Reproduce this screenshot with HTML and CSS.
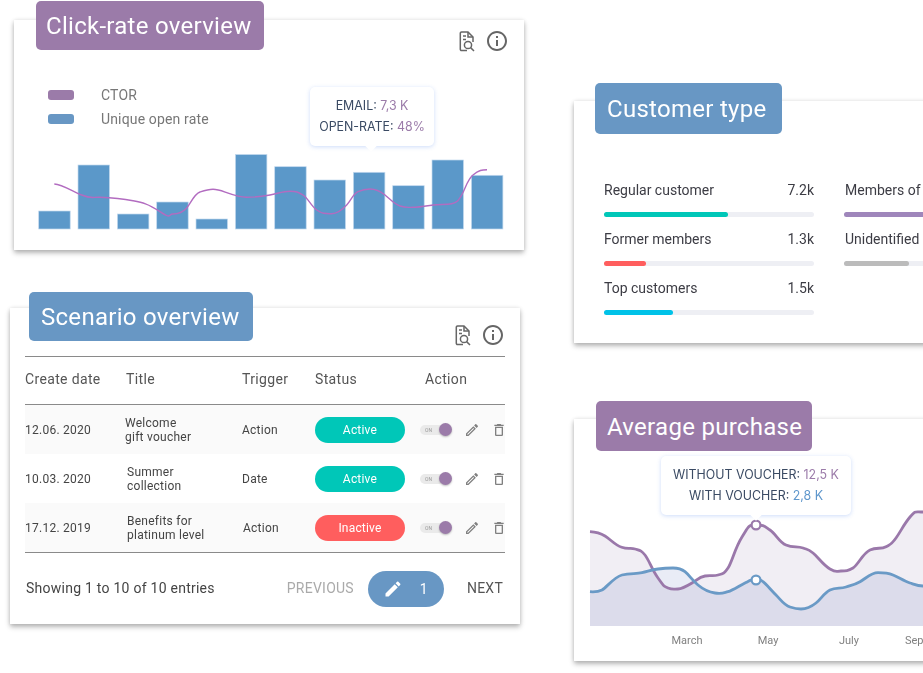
FILE: index.html
```html
<!DOCTYPE html>
<html lang="en">
<head>
  <meta charset="UTF-8">
  <title>Campaign dashboard</title>
  <link rel="stylesheet" href="styles.css">
</head>
<body>
  <div class="board">
    <div class="col-left">

      <section class="card card-clicks">
        <div class="card-title title-purple">Click-rate overview</div>
        <div class="card-tools">
          <svg class="icon-doc" viewBox="0 0 16 21"><path d="M8 19.500H2.500a1.200 1.200 0 0 1-1.200-1.200V2.200A1.200 1.200 0 0 1 2.500 1H9l5 5v5"/><path d="M9 1v5h5M4 5h3M4 8.500h3"/><circle cx="9" cy="14" r="3.600"/><path d="M11.600 16.600L15 20"/></svg>
          <svg class="icon-info" viewBox="0 0 24 24"><path d="M11 7h2v2h-2zm0 4h2v6h-2zm1-9C6.480 2 2 6.480 2 12s4.480 10 10 10 10-4.480 10-10S17.520 2 12 2zm0 18c-4.410 0-8-3.590-8-8s3.590-8 8-8 8 3.590 8 8-3.590 8-8 8z"/></svg>
        </div>
        <ul class="legend">
          <li><span class="swatch swatch-purple"></span>CTOR</li>
          <li><span class="swatch swatch-blue"></span>Unique open rate</li>
        </ul>
        <div class="tooltip tooltip-clicks">
          <div>EMAIL: <span class="val-purple">7,3 K</span></div>
          <div>OPEN-RATE: <span class="val-purple">48%</span></div>
        </div>
        <svg class="bars" viewBox="14 150 510 84">
          <rect x="38.700" y="211" width="31.500" height="18"/>
          <rect x="78" y="165" width="31.500" height="64"/>
          <rect x="117.400" y="214" width="31.500" height="15"/>
          <rect x="156.700" y="202" width="31.500" height="27"/>
          <rect x="196" y="219" width="31.500" height="10"/>
          <rect x="235.400" y="154.500" width="31.500" height="74.500"/>
          <rect x="274.700" y="166.700" width="31.500" height="62.300"/>
          <rect x="314" y="180" width="31.500" height="49"/>
          <rect x="353.400" y="172.300" width="31.500" height="56.700"/>
          <rect x="392.700" y="185.700" width="31.500" height="43.300"/>
          <rect x="432" y="160" width="31.500" height="69"/>
          <rect x="471.400" y="175.300" width="31.500" height="53.700"/>
          <path class="bars-line" d="M54.300 184C62 184.500 72 191 81.700 195S92 197 100 197.300S124 199 133 200.700S148 203.500 160 211.700S168 214 173 214S183 212 186.700 208S194 194 200 192S208 189.300 213 189.300S222 191 226.700 192.700S240 197.300 246.700 197.300S262 196.500 270 195S283 191.300 290 191.300S298 192 303 195S311 206 316.700 210S326 213.700 331.700 213.700S342 210 346.700 205S353 194 358 191.700S365 189 370 189S380 191 385 195S394 204 400 206S408 207.300 413 207.300S426 206 433 205S446 205 451.700 203.700S458 201 461.700 195S467 180 473 175S482 169.700 487 169.700"/>
        </svg>
      </section>

      <section class="card card-scenario">
        <div class="card-title title-blue">Scenario overview</div>
        <div class="card-tools">
          <svg class="icon-doc" viewBox="0 0 16 21"><path d="M8 19.500H2.500a1.200 1.200 0 0 1-1.200-1.200V2.200A1.200 1.200 0 0 1 2.500 1H9l5 5v5"/><path d="M9 1v5h5M4 5h3M4 8.500h3"/><circle cx="9" cy="14" r="3.600"/><path d="M11.600 16.600L15 20"/></svg>
          <svg class="icon-info" viewBox="0 0 24 24"><path d="M11 7h2v2h-2zm0 4h2v6h-2zm1-9C6.480 2 2 6.480 2 12s4.480 10 10 10 10-4.480 10-10S17.520 2 12 2zm0 18c-4.410 0-8-3.590-8-8s3.590-8 8-8 8 3.590 8 8-3.590 8-8 8z"/></svg>
        </div>

        <div class="table">
          <div class="table-head">
            <div>Create date</div>
            <div class="nudge-1">Title</div>
            <div>Trigger</div>
            <div>Status</div>
            <div class="head-action">Action</div>
          </div>

          <div class="table-row row-shaded">
            <div>12.06. 2020</div>
            <div>Welcome<br>gift voucher</div>
            <div>Action</div>
            <div><span class="status status-active">Active</span></div>
            <div class="actions">
              <span class="toggle"><span class="toggle-on">ON</span><span class="toggle-knob"></span></span>
              <svg class="icon-edit" viewBox="0 0 24 24"><path d="M14.060 9.020l.92.92L5.920 19H5v-.92l9.060-9.060M17.660 3c-.25 0-.51.1-.7.29l-1.830 1.830 3.750 3.750 1.830-1.830c.39-.39.39-1.020 0-1.410l-2.340-2.340c-.2-.2-.45-.29-.71-.29zm-3.600 3.190L3 17.250V21h3.750L17.810 9.940l-3.750-3.750z"/></svg>
              <svg class="icon-trash" viewBox="0 0 24 24"><path d="M6 19c0 1.100.9 2 2 2h8c1.100 0 2-.9 2-2V7H6v12zM8 9h8v10H8V9zm7.500-5l-1-1h-5l-1 1H5v2h14V4z"/></svg>
            </div>
          </div>

          <div class="table-row">
            <div>10.03. 2020</div>
            <div class="nudge-2">Summer<br>collection</div>
            <div>Date</div>
            <div><span class="status status-active">Active</span></div>
            <div class="actions">
              <span class="toggle"><span class="toggle-on">ON</span><span class="toggle-knob"></span></span>
              <svg class="icon-edit" viewBox="0 0 24 24"><path d="M14.060 9.020l.92.92L5.920 19H5v-.92l9.060-9.060M17.660 3c-.25 0-.51.1-.7.29l-1.830 1.830 3.750 3.750 1.830-1.830c.39-.39.39-1.020 0-1.410l-2.340-2.340c-.2-.2-.45-.29-.71-.29zm-3.600 3.190L3 17.250V21h3.750L17.810 9.940l-3.750-3.750z"/></svg>
              <svg class="icon-trash" viewBox="0 0 24 24"><path d="M6 19c0 1.100.9 2 2 2h8c1.100 0 2-.9 2-2V7H6v12zM8 9h8v10H8V9zm7.500-5l-1-1h-5l-1 1H5v2h14V4z"/></svg>
            </div>
          </div>

          <div class="table-row row-shaded">
            <div>17.12. 2019</div>
            <div class="nudge-2">Benefits for<br>platinum level</div>
            <div class="nudge-1">Action</div>
            <div><span class="status status-inactive">Inactive</span></div>
            <div class="actions">
              <span class="toggle"><span class="toggle-on">ON</span><span class="toggle-knob"></span></span>
              <svg class="icon-edit" viewBox="0 0 24 24"><path d="M14.060 9.020l.92.92L5.920 19H5v-.92l9.060-9.060M17.660 3c-.25 0-.51.1-.7.29l-1.830 1.830 3.750 3.750 1.830-1.830c.39-.39.39-1.020 0-1.410l-2.340-2.340c-.2-.2-.45-.29-.71-.29zm-3.600 3.190L3 17.250V21h3.750L17.810 9.940l-3.750-3.750z"/></svg>
              <svg class="icon-trash" viewBox="0 0 24 24"><path d="M6 19c0 1.100.9 2 2 2h8c1.100 0 2-.9 2-2V7H6v12zM8 9h8v10H8V9zm7.500-5l-1-1h-5l-1 1H5v2h14V4z"/></svg>
            </div>
          </div>
        </div>

        <div class="table-foot">
          <div class="entries">Showing 1 to 10 of 10 entries</div>
          <div class="pager">
            <span class="pager-prev">PREVIOUS</span>
            <span class="pager-page">
              <svg class="icon-pen" viewBox="0 0 24 24"><path d="M3 17.250V21h3.750L17.810 9.940l-3.750-3.750L3 17.250zM20.710 7.040c.39-.39.39-1.020 0-1.410l-2.340-2.340c-.39-.39-1.020-.39-1.410 0l-1.830 1.830 3.750 3.750 1.830-1.830z"/></svg>
              1
            </span>
            <span class="pager-next">NEXT</span>
          </div>
        </div>
      </section>
    </div>

    <div class="col-right">
      <section class="card card-customers">
        <div class="card-title title-blue">Customer type</div>
        <div class="meters">
          <div class="meter">
            <div class="meter-label"><span>Regular customer</span><span>7.2k</span></div>
            <div class="meter-track"><div class="meter-fill fill-teal" style="width: 59%"></div></div>
          </div>
          <div class="meter meter-side">
            <div class="meter-label"><span>Members of</span></div>
            <div class="meter-track"><div class="meter-fill fill-purple" style="width: 80%"></div></div>
          </div>
          <div class="meter">
            <div class="meter-label"><span>Former members</span><span>1.3k</span></div>
            <div class="meter-track"><div class="meter-fill fill-red" style="width: 20%"></div></div>
          </div>
          <div class="meter meter-side">
            <div class="meter-label"><span>Unidentified</span></div>
            <div class="meter-track"><div class="meter-fill fill-gray" style="width: 31%"></div></div>
          </div>
          <div class="meter">
            <div class="meter-label"><span>Top customers</span><span>1.5k</span></div>
            <div class="meter-track"><div class="meter-fill fill-cyan" style="width: 33%"></div></div>
          </div>
        </div>
      </section>

      <section class="card card-purchase">
        <div class="card-title title-purple">Average purchase</div>
        <div class="tooltip tooltip-purchase">
          <div>WITHOUT VOUCHER: <span class="val-purple">12,5 K</span></div>
          <div>WITH VOUCHER: <span class="val-blue">2,8 K</span></div>
        </div>
        <svg class="area-chart" viewBox="574 500 510 161">
          <path class="area-purple" d="M590 531.700C596 532 600 533 605 536S615 545 621.700 547.300S630 547.500 635 549S641 550 645 555S652 570 658 578S663 586 668 588S674 589 678 589S687 586 692 583S699 577 705 576S713 576.500 718 575S724 574 728 568S735 548 742 537S748 525 756 525S764 526 770 530S779 542 786 545S797 546 803 548S808 549 813 553S823 565 830 569S836 571 841 571S848 571 853 568S863 553 870 550S881 549.500 886 546.700S891 545 896 538S904 524 910 517S915 512 923 512H940V626H590Z"/>
          <path class="area-blue" d="M590 591.700C594 592 598 592 602 590S614 577 622 575S636 574 642 572.700S651 570 658 569S668 568 673 568S681 568.500 685 571.700S692 580 698 585S708 592 715 593S723 593 728 591.700S739 586 745 583S750 580 756 580S760 579.500 763 581.700S771 590 776 595S784 605 790 607S797 609 801 609S811 607 816 603S824 593 830 590S840 589 846 587S854 585 860 581.700S871 572.700 878 572.700S888 573 893 575S904 581 910 583S918 586 923 586H940V626H590Z"/>
          <path class="line-purple" d="M590 531.700C596 532 600 533 605 536S615 545 621.700 547.300S630 547.500 635 549S641 550 645 555S652 570 658 578S663 586 668 588S674 589 678 589S687 586 692 583S699 577 705 576S713 576.500 718 575S724 574 728 568S735 548 742 537S748 525 756 525S764 526 770 530S779 542 786 545S797 546 803 548S808 549 813 553S823 565 830 569S836 571 841 571S848 571 853 568S863 553 870 550S881 549.500 886 546.700S891 545 896 538S904 524 910 517S915 512 923 512H940"/>
          <path class="line-blue" d="M590 591.700C594 592 598 592 602 590S614 577 622 575S636 574 642 572.700S651 570 658 569S668 568 673 568S681 568.500 685 571.700S692 580 698 585S708 592 715 593S723 593 728 591.700S739 586 745 583S750 580 756 580S760 579.500 763 581.700S771 590 776 595S784 605 790 607S797 609 801 609S811 607 816 603S824 593 830 590S840 589 846 587S854 585 860 581.700S871 572.700 878 572.700S888 573 893 575S904 581 910 583S918 586 923 586H940"/>
          <circle class="dot-purple" cx="756" cy="525" r="4.400"/>
          <circle class="dot-blue" cx="756" cy="580" r="4.400"/>
          <text class="axis-label" x="687" y="644" text-anchor="middle">March</text>
          <text class="axis-label" x="768" y="644" text-anchor="middle">May</text>
          <text class="axis-label" x="849" y="644" text-anchor="middle">July</text>
          <text class="axis-label" x="905" y="644">Sep</text>
        </svg>
      </section>
    </div>
  </div>
</body>
</html>
```

FILE: styles.css
```css
html, body {
  margin: 0;
  padding: 0;
  background: #fff;
}
body {
  font-family: Roboto, "Liberation Sans", sans-serif;
  color: #444;
  overflow: hidden;
}
.board {
  display: flex;
  width: 923px;
  height: 673px;
  overflow: hidden;
}
.col-left {
  flex: 0 0 574px;
}
.col-right {
  flex: 0 0 510px;
  padding-top: 101px;
}

/* cards */
.card {
  position: relative;
  width: 510px;
  background: #fff;
  box-shadow: 0 3px 5px rgba(0, 0, 0, .28), 0 0 4px rgba(0, 0, 0, .1);
}
.card-clicks {
  height: 230px;
  margin: 20px 0 0 14px;
  display: flex;
  flex-direction: column;
}
.card-scenario {
  height: 316px;
  margin: 58px 0 0 10px;
}
.card-customers {
  height: 242px;
}
.card-purchase {
  height: 242px;
  margin-top: 76px;
  display: flex;
  flex-direction: column;
  justify-content: flex-end;
}
.card-title {
  position: absolute;
  box-sizing: border-box;
  height: 49px;
  padding: 1px 0 0 10px;
  line-height: 49px;
  font-size: 24px;
  letter-spacing: .28px;
  color: #fff;
  border-radius: 5px;
  white-space: nowrap;
}
.title-purple {
  background: #9b7ba9;
}
.title-blue {
  background: #6897c4;
}
.card-clicks .card-title {
  left: 22px;
  top: -19px;
  width: 228px;
}
.card-scenario .card-title {
  left: 19px;
  top: -16px;
  width: 224px;
  padding-left: 12px;
}
.card-customers .card-title {
  left: 21px;
  top: -18px;
  width: 187px;
  height: 51px;
  line-height: 51px;
  padding-left: 12px;
}
.card-purchase .card-title {
  left: 22px;
  top: -18px;
  width: 216px;
  height: 50px;
  line-height: 50px;
  padding-left: 11px;
}
.card-tools {
  display: flex;
  justify-content: flex-end;
  align-items: center;
  gap: 10px;
  padding: 9px 15px 0 0;
}
.card-scenario .card-tools {
  padding-top: 15px;
}
.icon-doc {
  width: 16px;
  height: 21px;
  fill: none;
  stroke: #666;
  stroke-width: 1.5;
}
.icon-info {
  width: 24px;
  height: 24px;
  fill: #666;
}

/* click-rate card */
.legend {
  list-style: none;
  margin: 30px 0 0 34px;
  padding: 0;
  font-size: 14px;
  letter-spacing: .15px;
  color: #777;
}
.legend li {
  display: flex;
  align-items: center;
  gap: 27px;
  height: 24px;
}
.swatch {
  width: 26px;
  height: 10px;
  border-radius: 3px;
}
.swatch-purple {
  background: #9b7ba9;
}
.swatch-blue {
  background: #6897c4;
}
.bars {
  display: block;
  width: 510px;
  height: 84px;
  margin-top: auto;
  margin-bottom: 16px;
  fill: #5b98c9;
  stroke: #c4d9ee;
  stroke-width: .7;
}
.bars-line {
  fill: none;
  stroke: #b26cc0;
  stroke-width: 1.4;
}

/* tooltips */
.tooltip {
  position: absolute;
  box-sizing: border-box;
  display: flex;
  flex-direction: column;
  justify-content: center;
  gap: 5px;
  background: #fff;
  border-radius: 5px;
  box-shadow: 0 1px 4px rgba(90, 140, 240, .3);
  font-family: Inter, "Open Sans", sans-serif;
  font-size: 12.4px;
  line-height: 16px;
  text-align: center;
  color: #3a4a63;
  white-space: nowrap;
}
.tooltip::after {
  content: "";
  position: absolute;
  bottom: -4px;
  width: 8px;
  height: 8px;
  margin-left: -4px;
  background: #fff;
  transform: rotate(45deg);
}
.tooltip-clicks {
  left: 296px;
  top: 67px;
  width: 124px;
  height: 59px;
}
.tooltip-clicks::after {
  left: 61px;
}
.tooltip-purchase {
  left: 87px;
  top: 37px;
  width: 190px;
  height: 59px;
}
.tooltip-purchase::after {
  left: 95px;
}
.val-purple {
  color: #9b7ba9;
}
.val-blue {
  color: #5f97cc;
}

/* scenario table */
.table {
  margin: 9px 15px 0;
  border-top: 1px solid #8a8a8a;
  border-bottom: 1px solid #8a8a8a;
}
.table-head,
.table-row {
  display: grid;
  grid-template-columns: 100px 117px 73px 105px 85px;
  align-items: center;
}
.table-head {
  height: 44px;
  padding-bottom: 3px;
  font-size: 14px;
  letter-spacing: .35px;
  color: #555;
  border-bottom: 1px solid #8a8a8a;
}
.head-action {
  padding-left: 5px;
}
.table-row {
  height: 49px;
  font-size: 12px;
  line-height: 14px;
  letter-spacing: .25px;
}
.row-shaded {
  background: #fafafa;
}
.nudge-1 {
  padding-left: 1px;
}
.nudge-2 {
  padding-left: 2px;
}
.status {
  display: block;
  width: 90px;
  height: 26px;
  line-height: 27px;
  border-radius: 13px;
  text-align: center;
  color: #fff;
  font-size: 12px;
  letter-spacing: .2px;
}
.status-active {
  background: #00c7b8;
}
.status-inactive {
  background: #ff5e5e;
}
.actions {
  display: flex;
  align-items: center;
}
.toggle {
  position: relative;
  width: 32px;
  height: 14px;
  flex: none;
}
.toggle-on {
  position: absolute;
  left: 0;
  top: 2px;
  width: 24px;
  height: 10px;
  border-radius: 5px;
  background: #eaeaea;
  color: #999;
  font-size: 5px;
  line-height: 10px;
  letter-spacing: 0;
  text-indent: 5px;
}
.toggle-knob {
  position: absolute;
  right: 0;
  top: 0;
  width: 13px;
  height: 13px;
  border-radius: 50%;
  background: #9b7ba9;
  box-shadow: 0 1px 2px rgba(0, 0, 0, .25);
}
.icon-edit {
  width: 16px;
  height: 16px;
  margin-left: 12px;
  flex: none;
  fill: #808080;
}
.icon-trash {
  width: 16px;
  height: 16px;
  margin-left: 11px;
  flex: none;
  fill: #808080;
}
.table-foot {
  display: flex;
  justify-content: space-between;
  align-items: center;
  box-sizing: border-box;
  height: 71px;
  padding: 0 17px 2px 16px;
  font-size: 14px;
  letter-spacing: .25px;
}
.pager {
  display: flex;
  align-items: center;
}
.pager-prev {
  color: #aaa;
}
.pager-page {
  display: flex;
  align-items: center;
  justify-content: space-between;
  box-sizing: border-box;
  width: 76px;
  height: 36px;
  margin: 2px 23px 0 14px;
  padding: 0 16px 0 15px;
  border-radius: 18px;
  background: #6897c4;
  color: #fff;
}
.icon-pen {
  width: 20px;
  height: 20px;
  fill: #fff;
}
.pager-next {
  color: #555;
}

/* customer type */
.meters {
  display: grid;
  grid-template-columns: 210px 210px;
  column-gap: 30px;
  row-gap: 12px;
  padding: 79px 0 0 30px;
}
.meter-label {
  display: flex;
  justify-content: space-between;
  height: 20px;
  margin-bottom: 12px;
  font-size: 14px;
  line-height: 20px;
  color: #3c3c44;
}
.meter-side .meter-label {
  padding-left: 1px;
}
.meter-track {
  height: 5px;
  border-radius: 3px;
  background: #eeeff4;
}
.meter-fill {
  height: 5px;
  border-radius: 3px;
}
.fill-teal {
  background: #00c7b8;
}
.fill-red {
  background: #ff5e5e;
}
.fill-cyan {
  background: #00c2e8;
}
.fill-purple {
  background: #9f86bb;
}
.fill-gray {
  background: #bbb;
}

/* average purchase */
.area-chart {
  display: block;
  width: 510px;
  height: 161px;
}
.area-purple {
  fill: #f1eef4;
}
.area-blue {
  fill: #e9ecf6;
  mix-blend-mode: multiply;
}
.line-purple,
.line-blue {
  fill: none;
  stroke-width: 2.8;
}
.line-purple {
  stroke: #9a78aa;
}
.line-blue {
  stroke: #6a9ac6;
}
.dot-purple,
.dot-blue {
  fill: #fff;
  stroke-width: 2.2;
}
.dot-purple {
  stroke: #9a78aa;
}
.dot-blue {
  stroke: #6a9ac6;
}
.axis-label {
  font-family: Roboto, sans-serif;
  font-size: 11px;
  fill: #808080;
}
```
